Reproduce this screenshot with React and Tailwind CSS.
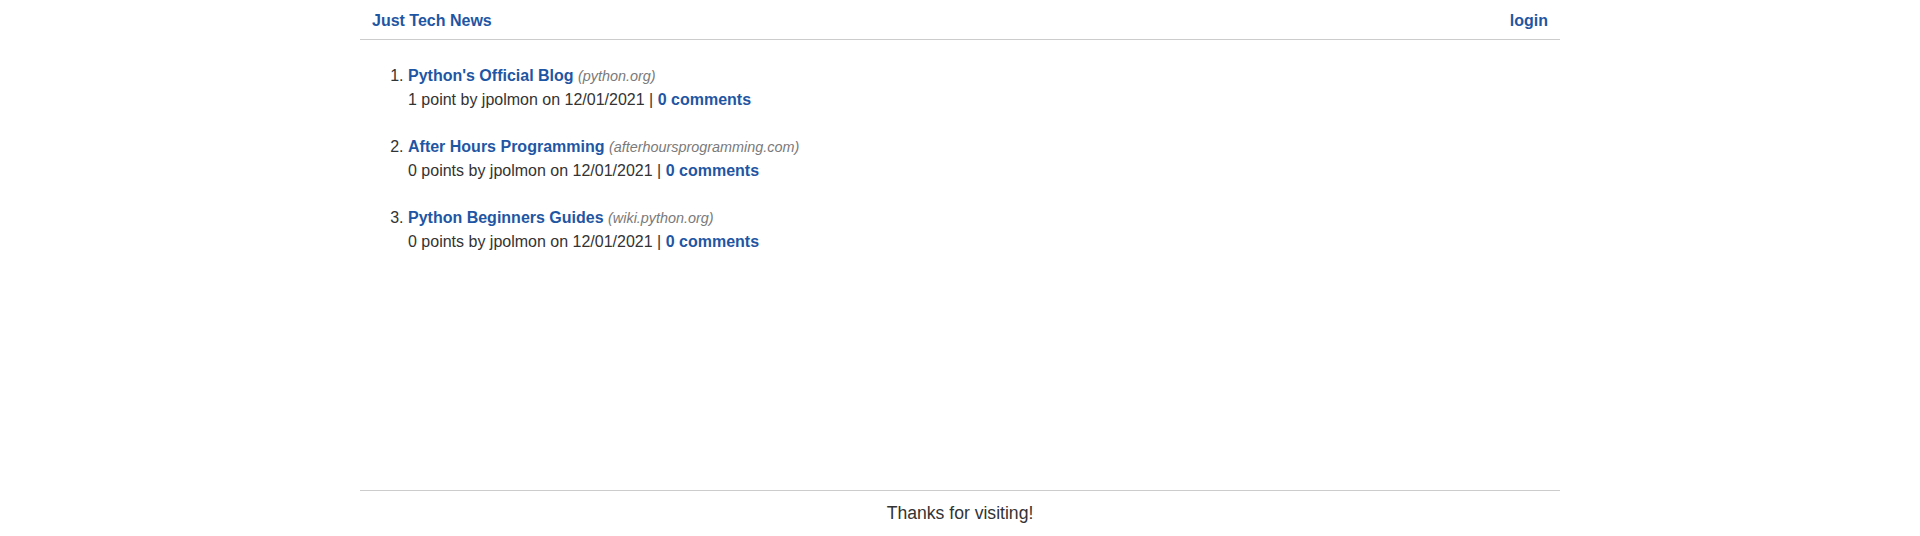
import React from "react";

const posts = [
  { title: "Python's Official Blog", domain: "python.org", points: "1 point" },
  { title: "After Hours Programming", domain: "afterhoursprogramming.com", points: "0 points" },
  { title: "Python Beginners Guides", domain: "wiki.python.org", points: "0 points" },
];

export default function App() {
  return (
    <div className="min-h-screen flex flex-col bg-white text-[#333] font-['Liberation_Sans',Arial,sans-serif] text-[16px] leading-[24px]">
      <div className="w-[1200px] mx-auto flex-1 flex flex-col">
        <header className="flex justify-between items-center px-3 pt-[2px] h-[40px] border-b border-[#cccccc]">
          <a href="#" className="font-bold text-[#1f56a3]">Just Tech News</a>
          <a href="#" className="font-bold text-[#1f56a3]">login</a>
        </header>
        <main className="flex-1 px-2 pt-6">
          <ol className="list-decimal pl-10">
            {posts.map((p, i) => (
              <li key={i} className="mb-[23px]">
                <div className="h-[24px]">
                  <a href="#" className="font-bold text-[#1f56a3]">{p.title}</a>{" "}
                  <span className="italic text-[14.4px] leading-none text-[#7a7a7a]">({p.domain})</span>
                </div>
                <div className="h-[24px]">
                  {p.points} by jpolmon on 12/01/2021 |{" "}
                  <a href="#" className="font-bold text-[#1f56a3]">0 comments</a>
                </div>
              </li>
            ))}
          </ol>
        </main>
        <footer className="border-t border-[#cccccc] pt-[10px] pb-[11px] text-center text-[17.6px] leading-[24px]">
          Thanks for visiting!
        </footer>
      </div>
    </div>
  );
}
